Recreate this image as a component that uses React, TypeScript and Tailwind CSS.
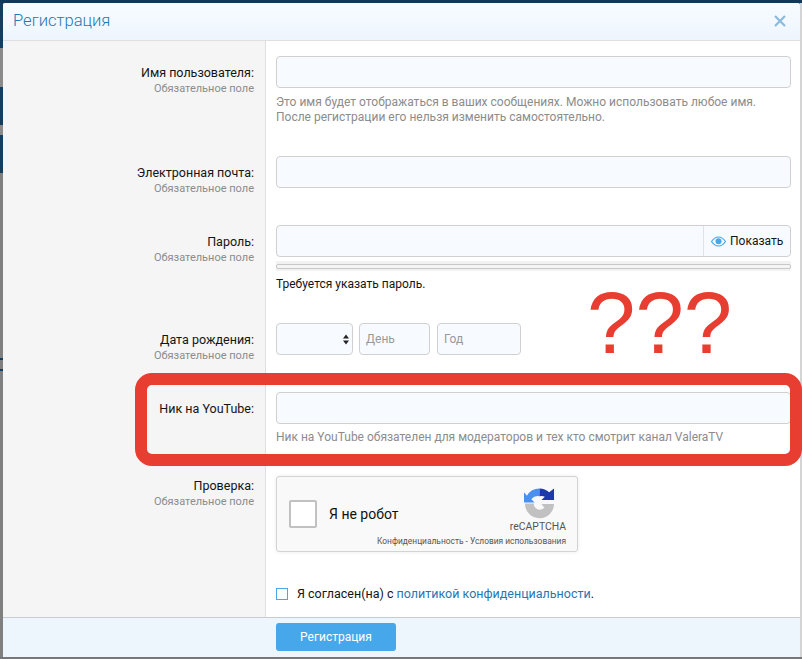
const font = "font-['Roboto','Liberation_Sans',sans-serif]";

function Row({ label, sub, pad = "pt-[24px]", height, children }: { label?: string; sub?: boolean; pad?: string; height: string; children: React.ReactNode }) {
  return (
    <div className={`flex ${height}`}>
      <div className={`w-[262px] shrink-0 bg-[#f5f5f5] ${pad} pr-[11px] text-right`}>
        {label && <div className="text-[12.5px] leading-[16px] text-[#141414]">{label}</div>}
        {sub && <div className="mt-[1px] text-[11px] leading-[14px] text-[#8c8c8c]">Обязательное поле</div>}
      </div>
      <div className="flex-1 border-l border-[#dfdfdf] pl-[10px] pr-[9px] pt-[15px]">{children}</div>
    </div>
  );
}

const field = "h-[32px] rounded-[4px] border border-[#d0d0d0] bg-[#f7fbff]";

export default function App() {
  return (
    <div className={`${font} relative flex h-[659px] w-[802px] flex-col overflow-hidden bg-[#808080]`}>
      <div className="h-[3px] shrink-0 bg-[#0f3a5c]" />
      <div className="flex h-[654px] shrink-0">
        <div className="flex w-[3px] shrink-0 flex-col bg-[#808080]">
          <div className="h-[45px] bg-[#123f61]" />
          <div className="h-[39px] bg-[#8a8a8a]" />
          <div className="h-[38px] bg-[#123f61]" />
          <div className="h-[10px] bg-[#8a8a8a]" />
          <div className="h-[38px] bg-[#123f61]" />
          <div className="h-[185px]" />
          <div className="h-[2px] bg-[#123f61]" />
          <div className="h-[9px]" />
          <div className="h-[2px] bg-[#123f61]" />
        </div>
        <div className="flex min-w-0 flex-1 flex-col overflow-hidden rounded-t-[3px] bg-white">
          <div className="flex h-[38px] shrink-0 items-center justify-between border-b border-[#dfdfdf] bg-gradient-to-b from-[#f8fcff] to-[#edf5fd] pl-[10px] pr-[14px]">
            <span className="text-[16.600px] font-light text-[#2577b1]">Регистрация</span>
            <svg className="mb-[1px]" width="12" height="12" viewBox="0 0 12 12"><path d="M1 1l10 10M11 1L1 11" stroke="#8abbdf" strokeWidth="2.200" /></svg>
          </div>
          <div className="flex-1 overflow-hidden">
            <Row label="Имя пользователя:" sub height="h-[100px]">
              <div className={field} />
              <div className="mt-[7px] text-[12px] leading-[15px] text-[#8c8c8c]">Это имя будет отображаться в ваших сообщениях. Можно использовать любое имя.<br />После регистрации его нельзя изменить самостоятельно.</div>
            </Row>
            <Row label="Электронная почта:" sub height="h-[69px]">
              <div className={field} />
            </Row>
            <Row label="Пароль:" sub height="h-[98px]">
              <div className={`${field} flex justify-end`}>
                <div className="flex w-[87px] items-center gap-[4px] border-l border-[#dfe3e8] pl-[7px] text-[12px] text-[#141414]">
                  <svg width="15" height="11" viewBox="0 0 15 11"><path d="M.5 5.500C2.500 2.500 5 1 7.500 1s5 1.500 7 4.500c-2 3-4.500 4.500-7 4.500s-5-1.500-7-4.500z" fill="none" stroke="#47a7eb" strokeWidth="1.200" /><circle cx="7.500" cy="5.300" r="3" fill="#47a7eb" /></svg>
                  Показать
                </div>
              </div>
              <div className="mt-[4px] flex h-[10px] items-center bg-[#f2f2f2]">
                <div className="h-[5px] w-full rounded-[2px] border border-[#c8c8c8] bg-[#f5f5f5]" />
              </div>
              <div className="mt-[6px] text-[12px] leading-[15px] text-[#141414]">Требуется указать пароль.</div>
            </Row>
            <Row label="Дата рождения:" sub height="h-[69px]">
              <div className="flex gap-[6px]">
                <div className={`${field} flex w-[77px] items-center justify-end pr-[2px]`}>
                  <svg width="8" height="11" viewBox="0 0 8 11"><path d="M4 .500L7 4.500H1zM4 10.500L1 6.500H7z" fill="#222" /></svg>
                </div>
                <div className={`${field} w-[71px] pl-[6px] text-[12px] leading-[30px] text-[#999]`}>День</div>
                <div className={`${field} ml-[1px] w-[84px] pl-[6px] text-[12px] leading-[30px] text-[#999]`}>Год</div>
              </div>
            </Row>
            <Row label="Ник на YouTube:" height="h-[84px]">
              <div className={field} />
              <div className="mt-[6px] text-[12px] leading-[15px] text-[#8c8c8c]">Ник на YouTube обязателен для модераторов и тех кто смотрит канал ValeraTV</div>
            </Row>
            <Row label="Проверка:" sub pad="pt-[17px]" height="h-[156px]">
              <div className="flex h-[76px] w-[302px] items-center rounded-[3px] border border-[#d3d3d3] bg-[#f9f9f9] shadow-[0_0_4px_rgba(0,0,0,0.08)]">
                <div className="flex w-[90px] shrink-0 items-center">
                  <div className="ml-[12px] h-[28px] w-[28px] shrink-0 rounded-[2px] border-2 border-[#c1c1c1] bg-white" />
                  <div className="ml-[12px] shrink-0 whitespace-nowrap text-[14px] text-[#111]">Я не робот</div>
                </div>
                <div className="ml-auto flex h-full flex-col items-end pr-[11px] pt-[10px]">
                  <svg width="31" height="32" viewBox="0 0 32 32" className="mr-[11px]">
                    <path d="M16 1A15 15 0 0 0 3 8.500L0 5V15.500H11L7.500 12A9 9 0 0 1 16 9z" fill="#4a90f0" />
                    <path d="M16 1A15 15 0 0 1 26 5L31 1V13H18L21.500 9.500A8 8 0 0 0 16 9z" fill="#1c3aa9" />
                    <path d="M1 16.500H10A7 7 0 0 0 16 23 7 7 0 0 0 21 21L18 17H31A15 15 0 0 1 1 16.500z" fill="#c1c1c1" />
                  </svg>
                  <div className="mt-[2px] text-[10.400px] leading-[12px] text-[#555]">reCAPTCHA</div>
                  <div className="mt-[2px] whitespace-nowrap text-[8.400px] leading-[12px] text-[#555]">Конфиденциальность - Условия использования</div>
                </div>
              </div>
              <div className="mt-[34px] flex items-center text-[12.500px] leading-[16px] text-[#141414]">
                <div className="mr-[9px] h-[12px] w-[12px] border-[1.500px] border-[#47a7eb] bg-white" />
                <span>Я согласен(на) с <span className="text-[#2577b1]">политикой конфиденциальности</span>.</span>
              </div>
            </Row>
          </div>
          <div className="flex h-[40px] shrink-0 items-center border-t border-[#c8ccd2] bg-[#edf5fd] pb-[2px] pl-[273px]">
            <div className="flex h-[28px] w-[120px] items-center justify-center rounded-[3px] bg-[#47a7eb] text-[12px] text-white">Регистрация</div>
          </div>
        </div>
        <div className="w-[2px] shrink-0 bg-[#d4d4d4]" />
      </div>
      <div className="h-[2px] shrink-0 bg-[#777777]" />
      <div className="absolute left-[135px] top-[373px] h-[93px] w-[667px] rounded-[17px] border-[12px] border-[#e83e32]" />
      <div className="absolute left-[587px] top-[268px] text-[87px] leading-[110px] text-[#e83e32] font-['Liberation_Sans',sans-serif]">???</div>
    </div>
  );
}
